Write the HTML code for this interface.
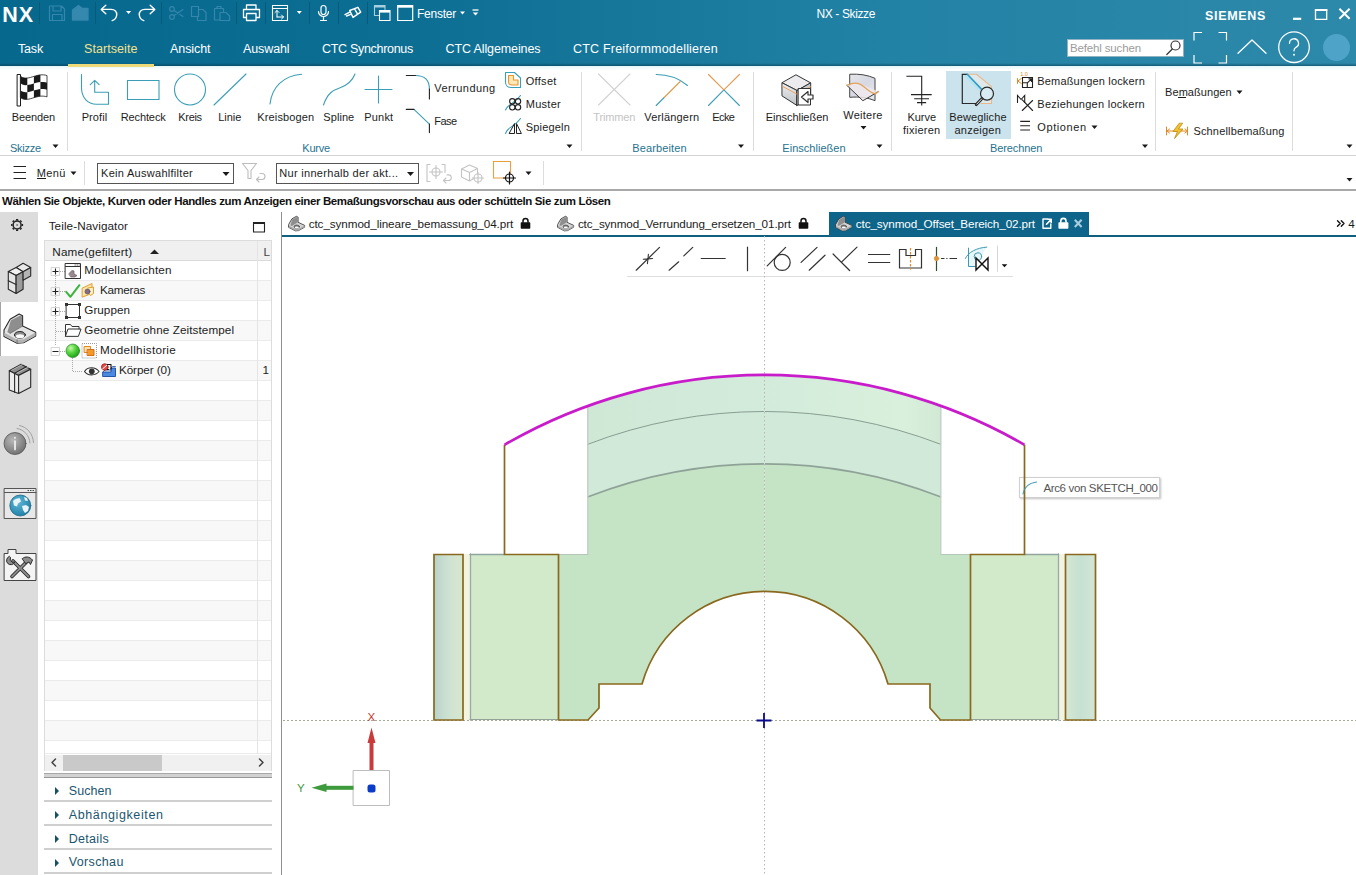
<!DOCTYPE html>
<html lang="de">
<head>
<meta charset="utf-8">
<title>NX - Skizze</title>
<style>
html,body{margin:0;padding:0;}
body{width:1356px;height:875px;overflow:hidden;background:#fff;position:relative;font-family:"Liberation Sans",sans-serif;font-size:12px;color:#1a1a1a;}
.abs{position:absolute;}
.t{position:absolute;white-space:nowrap;}
#hdr{left:0;top:0;width:1356px;height:66px;background:linear-gradient(90deg,#07688e 0%,#0d6e93 30%,#2282a5 65%,#2d89aa 100%);}
#hdrline{left:0;top:63px;width:1356px;height:3px;background:linear-gradient(180deg,rgba(0,50,70,0),rgba(0,50,70,.5));}
.vsep{position:absolute;width:1px;background:#dcdcdc;}
.arr{position:absolute;width:0;height:0;border-left:3px solid transparent;border-right:3px solid transparent;border-top:3.5px solid #1a1a1a;}
#ribline{left:0;top:155px;width:1356px;height:1px;background:#d4d4d4;}
#selline{left:0;top:189px;width:1356px;height:2px;background:#a9a9a9;}
#lbar{left:0;top:212px;width:38px;height:663px;background:#dcdcdc;}
#lsel{left:0;top:302px;width:38px;height:54px;background:#fff;}
.combo{position:absolute;height:21px;border:1px solid #555;box-sizing:border-box;background:#fff;}
.row{position:absolute;left:45px;width:226px;height:19px;border-bottom:1px solid #e9e9e9;}
.sec{position:absolute;left:44px;width:228px;height:2px;background:#cfcfcf;}
.tri{position:absolute;width:0;height:0;border-top:4px solid transparent;border-bottom:4px solid transparent;border-left:4.5px solid #15506a;}
</style>
</head>
<body>
<div id="hdr" class="abs"></div>
<div id="hdrline" class="abs"></div>
<div class="abs" style="left:68px;top:64px;width:86px;height:3px;background:#ecd97a;z-index:3"></div>
<div class="abs" style="left:1066.500px;top:39px;width:117px;height:18px;background:#fff;border:1px solid #8fb3c2;box-sizing:border-box"></div>
<div class="abs" style="left:1322.500px;top:33.500px;width:27px;height:27px;border-radius:50%;background:#4ea3c8"></div>
<svg class="abs" style="left:0;top:0" width="1356" height="66" viewBox="0 0 1356 66" fill="none" stroke="#fff" stroke-width="1.3" stroke-linecap="round" stroke-linejoin="round">
<!-- separators -->
<g stroke="#065a7c" stroke-width="1" stroke-linecap="butt"><path d="M39.5 2v22M95.5 2v22M161.5 2v22M236.5 2v22M265.5 2v22M309.5 2v22M338.5 2v22M367.5 2v22"/></g>
<!-- save (dim) -->
<g stroke="#3486ac" stroke-width="1.2"><path d="M49.5 6h12l3 3v11.5h-15zM53 6v5h8v-5M52.5 20.5v-6h9.5v6"/></g>
<!-- open (dim filled) -->
<path d="M72.5 20V10l6-4.5 4 3h5.500V20z" fill="#3588ae" stroke="#3588ae"/>
<!-- undo -->
<path d="M105.800 5.200l-4.600 4.200 4.600 4.300M101.500 9.400h9.500c4 0 6 2.500 5.700 5.600-.3 2.800-2 4.800-4.500 5.600" stroke-width="1.400"/>
<path d="M126 11h5.200l-2.600 3z" fill="#fff" stroke="none"/>
<!-- redo -->
<path d="M150.200 5.200l4.600 4.200-4.600 4.300M154.500 9.400h-9.500c-4 0-6 2.500-5.700 5.600.3 2.800 2 4.800 4.500 5.600" stroke-width="1.400"/>
<!-- cut copy paste (dim) -->
<g stroke="#3486ac" stroke-width="1.2"><circle cx="172" cy="17" r="2.300"/><circle cx="172" cy="9" r="2.300"/><path d="M174 15.500l9-6M174 10.500l9 6"/>
<path d="M191.500 6.500h7v10h-7zM198.500 9.500h4.500l3 3v8h-8.500v-4"/>
<path d="M214.500 8.500h9v4M214.500 8.500v11.500h5.500M217 8.500v-2h4v2M220 12.500h6l3.500 3.500v4.500h-9.500z"/></g>
<!-- print -->
<path d="M246.500 9.500V5h9.500v4.500M246.500 17.500h-3v-8h16v8h-3M246.500 13.500h9.500v7h-9.500z"/>
<!-- window w/ arrows -->
<path d="M272.500 5.500h15v15h-15zM272.500 8.500h15" stroke-width="1.100"/><path d="M277 17v-6.500M275 12.500l2-2 2 2M277 17h6.500M281.500 15l2 2-2 2" stroke-width="1"/>
<path d="M296.800 11h5l-2.500 3z" fill="#fff" stroke="none"/>
<!-- mic -->
<path d="M321 8a2.500 2.500 0 0 1 5 0v4a2.500 2.500 0 0 1-5 0zM318.500 11.500a5 5 0 0 0 10 0M323.500 16.700v3.500M320.500 20.500h6" stroke-width="1.200"/>
<!-- tag -->
<path d="M349.700 10.500L357.900 7.300 360.700 12.200 353 17.400zM354.500 8.700l3 5.500M345 14.600l4.300-2.300M346.500 16l3.700-1.300" stroke-width="1.400"/>
<!-- cascade windows -->
<g stroke-width="1.100" stroke-linejoin="miter"><path d="M374.500 5.500h10.500v4M374.500 5.500v10h4.500" stroke="#a9cfdf"/><path d="M374.500 6.500h10.500" stroke="#a9cfdf" stroke-width="2" stroke-linecap="butt"/><path d="M379.500 10.500h10.500v10h-10.500z"/><path d="M379.500 11.500h10.500" stroke-width="2.200" stroke-linecap="butt"/></g>
<!-- window -->
<path d="M397.700 5.700h15v14.800h-15z" stroke-width="1.200" stroke-linejoin="miter"/><path d="M397.500 6.500h15.500" stroke-width="2.400" stroke-linecap="butt"/>
<path d="M460 11.500h5l-2.500 3z" fill="#fff" stroke="none"/>
<path d="M472.800 12.500h5.400l-2.700 3z" fill="#fff" stroke="none"/><path d="M472.500 10h6" stroke-width="1.300" stroke-linecap="butt"/>
<!-- window controls -->
<path d="M1293 18.800h8.200" stroke-width="2.200" stroke-linecap="butt"/>
<path d="M1315.500 9.700h11.200v9.600h-11.200z" stroke-width="1.300" stroke-linejoin="miter"/><path d="M1314.900 10h12.400" stroke-width="2" stroke-linecap="butt"/>
<path d="M1339.400 8.800l10.200 10M1349.600 8.800l-10.200 10" stroke-width="2" stroke-linecap="butt"/>
<!-- search magnifier -->
<g stroke="#333" stroke-width="1.200"><circle cx="1175.500" cy="45.500" r="4.500" fill="#fff"/><path d="M1172.300 49l-5.500 5.500"/></g>
<!-- fullscreen brackets -->
<path d="M1194 40.500v-8h8M1218.500 32.500h8v8M1226.500 55v8h-8M1202 63h-8v-8" stroke-width="1.200" stroke-linecap="butt" stroke-linejoin="miter"/>
<!-- chevron up -->
<path d="M1238 53.300l14-13.300 14 13.300" stroke-width="1.300"/>
<!-- help -->
<circle cx="1294" cy="47.200" r="15.300" stroke-width="1.300"/>
<path d="M1289.500 43.300a4.500 4.500 0 1 1 6.500 4c-1.500 1-2 1.800-2 3.500" stroke-width="1.300"/><circle cx="1294" cy="54.800" r="1" fill="#fff" stroke="none"/>
</svg>

<div id="ribline" class="abs"></div>
<div id="selline" class="abs"></div>
<div class="abs" id="ribglow" style="left:0;top:66px;width:1356px;height:4px;background:linear-gradient(180deg,#e4f5f8,#fff)"></div>
<div class="abs" style="left:946px;top:71px;width:65px;height:68px;background:#cbe3ec"></div>
<div class="vsep" style="left:67px;top:72px;height:79px"></div>
<div class="vsep" style="left:581px;top:72px;height:79px"></div>
<div class="vsep" style="left:753px;top:72px;height:79px"></div>
<div class="vsep" style="left:891px;top:72px;height:79px"></div>
<div class="vsep" style="left:1155px;top:72px;height:79px"></div>
<div class="vsep" style="left:1292px;top:72px;height:79px"></div>
<div class="vsep" style="left:84px;top:161px;height:24px"></div>
<div class="vsep" style="left:543px;top:161px;height:24px"></div>
<div class="combo" style="left:97px;top:162.500px;width:137px"></div>
<div class="combo" style="left:276px;top:162.500px;width:143px"></div>
<div class="abs" id="ul1" style="left:36.500px;top:178px;width:9px;height:1px;background:#1c1c1c"></div>
<div class="abs" id="ul2" style="left:1177.500px;top:97px;width:8.500px;height:1px;background:#1c1c1c"></div>
<svg class="abs" style="left:0;top:66px" width="1356" height="125" viewBox="0 66 1356 125" fill="none" stroke="#3b9eb7" stroke-width="1.100" stroke-linecap="round" stroke-linejoin="round">
<!-- small dropdown arrows -->
<g fill="#1a1a1a" stroke="none">
<path d="M52.500 144.500h6l-3 3.500zM566.500 144.500h6l-3 3.500zM738 144.500h6l-3 3.500zM876.500 144.500h6l-3 3.500zM1142 144.500h6l-3 3.500zM1346.500 144.500h6l-3 3.500zM1346.500 178h6l-3 3.500z"/>
<path d="M860.500 126h6l-3 3.500zM1091.500 125.500h6l-3 3.500zM1236.500 90.500h6l-3 3.500zM70.500 171.500h6l-3 3.500zM222.500 172h7l-3.500 4zM407 172h7l-3.500 4zM525.500 171.500h6l-3 3.500z"/>
</g>
<!-- flag -->
<path d="M17.500 74.500h3v31.500h-3z" fill="#fff" stroke="#1a1a1a" stroke-width="1"/>
<path d="M20.7 76.5L22.3 77.4L24.0 77.9L25.6 78.1L27.3 78.0L28.9 77.8L30.6 77.4L32.2 76.9L33.9 76.4L35.5 75.9L37.1 75.5L38.8 75.1L40.4 74.9L42.1 74.8L43.7 74.9L45.4 75.1L47.0 75.6L47.0 96.9L45.4 96.4L43.7 96.2L42.1 96.1L40.4 96.2L38.8 96.4L37.1 96.8L35.5 97.2L33.9 97.7L32.2 98.2L30.6 98.7L28.9 99.1L27.3 99.3L25.6 99.4L24.0 99.2L22.3 98.7L20.7 97.8z" fill="#fff" stroke="#1a1a1a" stroke-width=".8"/>
<path d="M20.7 76.5L22.4 77.4L24.0 77.9L25.6 78.1L27.3 78.0L27.3 85.1L25.6 85.2L24.0 85.0L22.4 84.5L20.7 83.6zM33.9 76.4L35.5 75.9L37.1 75.5L38.8 75.1L40.4 74.9L40.4 82.0L38.8 82.2L37.1 82.6L35.5 83.0L33.9 83.5zM27.3 85.1L28.9 84.8L30.6 84.5L32.2 84.0L33.9 83.5L33.9 90.6L32.2 91.1L30.6 91.6L28.9 91.9L27.3 92.2zM40.4 82.0L42.0 81.9L43.7 82.0L45.4 82.2L47.0 82.7L47.0 89.8L45.4 89.3L43.7 89.1L42.0 89.0L40.4 89.1zM20.7 90.7L22.4 91.6L24.0 92.1L25.6 92.3L27.3 92.2L27.3 99.3L25.6 99.4L24.0 99.2L22.4 98.7L20.7 97.8zM33.9 90.6L35.5 90.1L37.1 89.7L38.8 89.3L40.4 89.1L40.4 96.2L38.8 96.4L37.1 96.8L35.5 97.2L33.9 97.7z" fill="#1a1a1a" stroke="none"/>
<!-- Profil -->
<path d="M81.500 74.500v13c0 10 6 16.700 15 16.700h12v-12h-13.800v-11M90.300 84.600l4.400-4.300 4.400 4.300"/>
<!-- Rechteck -->
<path d="M127.500 80.500h31.500v19h-31.500z" stroke-linejoin="miter"/>
<!-- Kreis -->
<circle cx="190" cy="89.500" r="15.500"/>
<!-- Linie -->
<path d="M214 105l32-31"/>
<!-- Kreisbogen -->
<path d="M270 104c2-17 13-28 31.500-29.700"/>
<!-- Spline -->
<path d="M323.500 105c4-12 10-15 16-17s12-5 15.500-14"/>
<!-- Punkt -->
<path d="M365 89.500h27M378.500 76v27"/>
<!-- Verrundung -->
<path d="M415.400 75.500c9 0 14 5 14 13.600"/><path d="M406.300 75.500h9.100M429.400 89.100v9.800" stroke="#222"/>
<!-- Fase -->
<path d="M414 109.400l15.400 14.700"/><path d="M406.300 109.400h7.700M429.400 124.100v8.500" stroke="#222"/>
<!-- Offset -->
<path d="M505.500 72.500h9l6 5.500v9.500h-9.500c-3.500 0-5.500-2.500-5.500-5.500z"/>
<path d="M508.500 75.500h5v4.500h4.500v5h-6c-2 0-3.500-1.500-3.500-3.500z" fill="#fde6b8" stroke="#e8962e"/>
<!-- Muster -->
<path d="M505.500 110c2-6 9-6 15-14.500"/>
<g stroke="#222" stroke-width="1.100"><circle cx="512.300" cy="101.300" r="2.700"/><circle cx="518" cy="101.300" r="2.700"/><circle cx="512.300" cy="107.300" r="2.700"/><circle cx="518" cy="107.300" r="2.700"/></g>
<!-- Spiegeln -->
<path d="M505.500 133.500c2-7 9-6 15-15"/>
<path d="M514.500 124v9.500h-5zM516.500 124v9.500h4.500z" stroke="#222" stroke-width="1"/>
<!-- Trimmen -->
<path d="M598.500 74l31.500 31M630 74l-31.500 31" stroke="#d2d2d2"/>
<!-- Verlaengern -->
<path d="M656.200 74.500c13 0 23 4 31.300 11"/><path d="M656.200 105.500l8-8"/><path d="M664.200 97.500l16-16" stroke="#e09a50"/>
<!-- Ecke -->
<path d="M708.500 105.500l15.400-15.700 15.500 15.700"/><path d="M708.500 74.500l15.400 15.300 15.500-15.300" stroke="#e09a50"/>
<!-- Einschliessen cube -->
<defs><linearGradient id="cg" x1="0" y1="0" x2="0" y2="1"><stop offset="0" stop-color="#eceef0"/><stop offset="1" stop-color="#bfc3c8"/></linearGradient></defs>
<g stroke="#333" stroke-width="1">
<path d="M796.300 75L810.700 82.900 797 90.500 782.300 82.900z" fill="#ececee"/>
<path d="M782.300 82.900L797 90.500V105.500L782.300 96.100z" fill="url(#cg)"/>
<path d="M797 90.500L810.700 82.900V97L797 105.500z" fill="#c9ccd0"/>
<path d="M782.800 86.500L797 94.200l13.500-7.500" stroke="#eaa45a" stroke-width="1" fill="none"/>
<path d="M798.500 88.500h12v16.500h-12z" fill="#fff" stroke-linejoin="miter"/>
<path d="M813 95h-5v-3.500l-6.500 5.500 6.500 5.500v-3.500h5z" fill="#fff" stroke-width="1.200"/>
</g>
<!-- Weitere -->
<defs><linearGradient id="wg" x1="0" y1="0" x2="1" y2="1"><stop offset="0" stop-color="#e6e6ea"/><stop offset=".5" stop-color="#d6d8e2"/><stop offset="1" stop-color="#ececf0"/></linearGradient></defs>
<g stroke-width="1">
<path d="M850.100 74.200c9-.5 17.500.8 24.900 4.100v22.400c-7.500-3.200-16-4.200-24.900-3.400z" fill="url(#wg)" stroke="#444"/>
<path d="M846.900 85.400L858.300 83.300 878.600 91.500 862.900 100.700z" fill="#efe9ec" fill-opacity=".85" stroke="none"/>
<path d="M846.900 85.400L862.900 100.700 878.600 91.500" stroke="#3a3a3a" fill="none"/>
<path d="M846.900 85.400c5-2.500 9-3 12.500-1.500 5 2 9 8 15.500 10l3.700-2.400" stroke="#e2a25a" stroke-width="1.200" fill="none"/>
</g>
<!-- Kurve fixieren -->
<path d="M906.400 76.300h15.300v29.200M911 94.600h20.700M914.200 98.800h14.800M917 102.600h9.100" stroke="#222" stroke-linecap="butt" stroke-linejoin="miter"/>
<!-- Bewegliche anzeigen -->
<path d="M967.300 74.300H976.500L991.500 86.600V103.500H981.900L981.200 88.900z" fill="#dfe9ec" stroke="none"/>
<path d="M963 75L967.300 74.300 981.200 88.900 979 91z" fill="#b8e4f2" stroke="none"/>
<path d="M967.300 74.300H976.500L991.500 86.600V103.500H981" stroke="#e9b88a" stroke-width="1.100"/>
<path d="M967.300 74.300H962.300V103.500H975.900" stroke="#2a2a2a" stroke-width="1.200" stroke-linejoin="miter"/>
<path d="M967.300 74.300L981.200 88.900" stroke="#2f9cc4" stroke-width="1.600"/>
<circle cx="987" cy="93.700" r="6.500" stroke="#2a2a2a" stroke-width="1.200" fill="#d8ebf2"/>
<path d="M982 98.500L976.300 104.600" stroke="#2a2a2a" stroke-width="3" stroke-linecap="round"/><path d="M981.600 99L976.800 104.100" stroke="#e8f2f5" stroke-width="1" stroke-linecap="round"/>
<!-- Bemassungen lockern icon -->
<g stroke="#222" stroke-width="1.100" stroke-linejoin="miter"><path d="M1022.500 77.500h10v10h-10zM1022.500 82.800h4.800v4.700"/><path d="M1027.300 82.800l4-3.700M1028.500 78.900h3v3" stroke-linecap="butt"/></g>
<path d="M1017.500 78.500v5M1021.300 78.500l-3.500 2.500 3.500 2.500" stroke="#e08a2a" stroke-width="1"/>
<text x="1020.200" y="76.300" font-family="Liberation Sans, sans-serif" font-size="5.500" fill="#e08a2a" stroke="none">1.0</text>
<!-- Beziehungen lockern icon -->
<g stroke="#222" stroke-width="1.100"><path d="M1017.500 102.500v-7l3.600 4 3.600-4v7" stroke-linejoin="miter"/><path d="M1022.300 99.900l10.300 10.600M1032.600 100.500l-10.300 10"/></g>
<!-- Optionen -->
<path d="M1020.200 121.400h9.800M1020.200 125.700h9.800M1020.200 130h9.800" stroke="#222" stroke-linecap="butt"/>
<!-- Schnellbemassung -->
<g stroke="#e08a2a" stroke-width="1"><path d="M1166.500 127v8M1187.500 127v8M1167 131h20M1169.500 129l-2.500 2 2.500 2M1185 129l2.500 2-2.500 2"/></g>
<path d="M1179 123.500l-6 8h4.500l-3 7 8.500-9.500h-4.500l4-5.500z" fill="#f2c230" stroke="#b98a10" stroke-width=".8"/>
<!-- hamburger -->
<path d="M13.500 166.500h12.500M13.500 172.500h12.500M13.500 178.500h12.500" stroke="#222" stroke-linecap="butt"/>
<!-- funnel (grey) -->
<g stroke="#bdbdbd" stroke-width="1.100"><path d="M242.500 163.500h14l-5.500 7v8h-3v-8z"/><path d="M259 177l-2.500 2.500 2.500 2.500M257 179.500h5a3 3 0 0 0 0-6h-2"/></g>
<!-- grey icons -->
<g stroke="#c4c4c4" stroke-width="1.100"><path d="M430 164.500h-3v17h3M442 164.500h3v8"/><circle cx="436" cy="172" r="4"/><path d="M436 165.500v13M429.500 172h13"/><path d="M446 178l-2.500 2.500 2.500 2.500M444 180.500h4.500a2.800 2.800 0 0 0 0-5.600h-1.500"/>
<path d="M461.500 169l8-4 8 3.500v8l-8 4.500-8-4zM461.500 169l8 3.500 8-4M469.500 172.500v8.500"/><circle cx="478" cy="178" r="4" fill="#fff"/><path d="M478 172.500v11M472.500 178h11"/></g>
<!-- orange square with crosshair -->
<path d="M493.500 161.500h17v16.500h-17z" stroke="#e8a040" stroke-linejoin="miter"/>
<g stroke="#111" stroke-width="1.200"><circle cx="509.500" cy="178" r="4" fill="#fff"/><path d="M509.500 172v12M503.500 178h12"/></g>
</svg>

<div id="lbar" class="abs"></div>
<div id="lsel" class="abs"></div>
<div class="abs" style="left:44px;top:212px;width:228px;height:663px;background:#fff"></div>
<div class="abs" style="left:45px;top:241px;width:226px;height:20px;background:#f0f0f0;border-bottom:1px solid #dadada;box-sizing:border-box"></div>
<div class="abs" style="left:45px;top:261px;width:226px;height:20px;background:#fff;border-bottom:1px solid #ebebeb;box-sizing:border-box"></div>
<div class="abs" style="left:45px;top:281px;width:226px;height:20px;background:#f8f8f8;border-bottom:1px solid #ebebeb;box-sizing:border-box"></div>
<div class="abs" style="left:45px;top:301px;width:226px;height:20px;background:#fff;border-bottom:1px solid #ebebeb;box-sizing:border-box"></div>
<div class="abs" style="left:45px;top:321px;width:226px;height:20px;background:#f8f8f8;border-bottom:1px solid #ebebeb;box-sizing:border-box"></div>
<div class="abs" style="left:45px;top:341px;width:226px;height:20px;background:#fff;border-bottom:1px solid #ebebeb;box-sizing:border-box"></div>
<div class="abs" style="left:45px;top:361px;width:226px;height:20px;background:#f8f8f8;border-bottom:1px solid #ebebeb;box-sizing:border-box"></div>
<div class="abs" style="left:45px;top:381px;width:226px;height:20px;background:#fff;border-bottom:1px solid #ebebeb;box-sizing:border-box"></div>
<div class="abs" style="left:45px;top:401px;width:226px;height:20px;background:#f8f8f8;border-bottom:1px solid #ebebeb;box-sizing:border-box"></div>
<div class="abs" style="left:45px;top:421px;width:226px;height:20px;background:#fff;border-bottom:1px solid #ebebeb;box-sizing:border-box"></div>
<div class="abs" style="left:45px;top:441px;width:226px;height:20px;background:#f8f8f8;border-bottom:1px solid #ebebeb;box-sizing:border-box"></div>
<div class="abs" style="left:45px;top:461px;width:226px;height:20px;background:#fff;border-bottom:1px solid #ebebeb;box-sizing:border-box"></div>
<div class="abs" style="left:45px;top:481px;width:226px;height:20px;background:#f8f8f8;border-bottom:1px solid #ebebeb;box-sizing:border-box"></div>
<div class="abs" style="left:45px;top:501px;width:226px;height:20px;background:#fff;border-bottom:1px solid #ebebeb;box-sizing:border-box"></div>
<div class="abs" style="left:45px;top:521px;width:226px;height:20px;background:#f8f8f8;border-bottom:1px solid #ebebeb;box-sizing:border-box"></div>
<div class="abs" style="left:45px;top:541px;width:226px;height:20px;background:#fff;border-bottom:1px solid #ebebeb;box-sizing:border-box"></div>
<div class="abs" style="left:45px;top:561px;width:226px;height:20px;background:#f8f8f8;border-bottom:1px solid #ebebeb;box-sizing:border-box"></div>
<div class="abs" style="left:45px;top:581px;width:226px;height:20px;background:#fff;border-bottom:1px solid #ebebeb;box-sizing:border-box"></div>
<div class="abs" style="left:45px;top:601px;width:226px;height:20px;background:#f8f8f8;border-bottom:1px solid #ebebeb;box-sizing:border-box"></div>
<div class="abs" style="left:45px;top:621px;width:226px;height:20px;background:#fff;border-bottom:1px solid #ebebeb;box-sizing:border-box"></div>
<div class="abs" style="left:45px;top:641px;width:226px;height:20px;background:#f8f8f8;border-bottom:1px solid #ebebeb;box-sizing:border-box"></div>
<div class="abs" style="left:45px;top:661px;width:226px;height:20px;background:#fff;border-bottom:1px solid #ebebeb;box-sizing:border-box"></div>
<div class="abs" style="left:45px;top:681px;width:226px;height:20px;background:#f8f8f8;border-bottom:1px solid #ebebeb;box-sizing:border-box"></div>
<div class="abs" style="left:45px;top:701px;width:226px;height:20px;background:#fff;border-bottom:1px solid #ebebeb;box-sizing:border-box"></div>
<div class="abs" style="left:45px;top:721px;width:226px;height:20px;background:#f8f8f8;border-bottom:1px solid #ebebeb;box-sizing:border-box"></div>
<div class="abs" style="left:45px;top:741px;width:226px;height:13px;background:#fff;border-bottom:1px solid #ebebeb;box-sizing:border-box"></div>
<div class="abs" style="left:257px;top:241px;width:1px;height:513px;background:#e4e4e4"></div>
<div class="abs" style="left:44px;top:240px;width:228px;height:1px;background:#dcdcdc"></div>
<div class="abs" style="left:44px;top:240px;width:1px;height:531px;background:#dcdcdc"></div>
<div class="abs" style="left:271px;top:240px;width:1px;height:531px;background:#dcdcdc"></div>
<div class="abs" style="left:45px;top:755px;width:226px;height:16px;background:#f0f0f0"></div>
<div class="abs" style="left:63px;top:755px;width:99px;height:16px;background:#c9c9c9"></div>
<div class="abs" style="left:44px;top:773px;width:228px;height:5px;background:#d2d2d2;border-top:1px solid #a8a8a8;border-bottom:1px solid #989898;box-sizing:border-box"></div>
<div class="sec" style="top:800px"></div>
<div class="sec" style="top:824px"></div>
<div class="sec" style="top:848px"></div>
<div class="sec" style="top:872px"></div>
<div class="tri" style="left:54.500px;top:786.5px"></div>
<div class="tri" style="left:54.500px;top:811px"></div>
<div class="tri" style="left:54.500px;top:835px"></div>
<div class="tri" style="left:54.500px;top:858.6px"></div>
<div class="abs" style="left:281px;top:212px;width:1px;height:663px;background:#8f8f8f"></div>
<div class="abs" style="left:272px;top:212px;width:9px;height:663px;background:#fff"></div>
<div class="abs" style="left:0;top:302px;width:1px;height:54px;background:#a4a4a4"></div><svg class="abs" style="left:0;top:212px" width="283" height="663" viewBox="0 212 283 663" fill="none" stroke="#222" stroke-width="1" stroke-linecap="round" stroke-linejoin="round">
<!-- gear -->
<circle cx="17.1" cy="225" r="4" stroke-width="1.500" stroke="#222"/><path d="M21.70 225.00L23.10 225.00M20.35 228.25L21.34 229.24M17.10 229.60L17.10 231.00M13.85 228.25L12.86 229.24M12.50 225.00L11.10 225.00M13.85 221.75L12.86 220.76M17.10 220.40L17.10 219.00M20.35 221.75L21.34 220.76" stroke-width="2.200" stroke-linecap="butt" stroke="#222"/><circle cx="17.1" cy="225" r=".7" fill="#222" stroke="none"/>
<!-- icon1 blocks -->
<g stroke="#2a2a2a" stroke-width="1.100" stroke-linejoin="round">
<path d="M16.100 267.500L23.100 263.300 30.700 267.600 23.100 271.800z" fill="#e9e9e9"/>
<path d="M8.300 271.600L16.100 267.500 23.100 271.800 16.100 275.600z" fill="#f2f2f2"/>
<path d="M8.300 271.600L16.100 275.600V293.500L8.300 289.200z" fill="#e6e6e6"/>
<path d="M16.100 275.600L23.100 271.800V289.200L16.100 293.500z" fill="#9c9c9c"/>
<path d="M23.100 271.800L30.700 267.600V276.100L23.100 280.200z" fill="#b4b4b4"/>
<path d="M8.300 280.700L16.100 284.400" fill="none"/>
</g>
<!-- icon2 bracket -->
<g stroke="#2a2a2a" stroke-width="1.100" stroke-linejoin="round">
<path d="M4 329.900L10.100 319.300 19.100 314.100 22.600 315.800V326.100L35.700 332.200V335.900L23.600 342.700 17.100 343.200 4 336.400z" fill="#e4e4e4"/>
<path d="M10.800 320.600L20.100 315.600 22.100 316.600V326.100L10 333.500 7.300 332.200z" fill="#8e8e8e" stroke="none"/>
<path d="M4.300 336L17.100 342.900 23.600 342.400 35.500 335.700V332.500L23.600 339.300 17.100 339.700 4.300 332.800z" fill="#b2b2b2" stroke="none"/>
<path d="M22.600 326.100L10 333.500M17.100 339.700v3.300" stroke="#555" stroke-width=".7" fill="none"/>
<ellipse cx="19.900" cy="334.900" rx="5.500" ry="3.400" fill="#8a8a8a" stroke-width="1"/>
<ellipse cx="20" cy="336.300" rx="4.200" ry="2" fill="#fafafa" stroke="none"/>
</g>
<!-- icon3 books -->
<g stroke="#2a2a2a" stroke-width="1.100" stroke-linejoin="round">
<path d="M9.300 370.800L21.100 364.300 30.700 369.300 18.600 375.400z" fill="#8c8c8c"/>
<path d="M9.300 370.800L18.600 375.400V393.500L9.300 390z" fill="#ececec"/>
<path d="M18.600 375.400L30.700 369.300V387.200L18.600 393.500z" fill="#dedede"/>
<path d="M14.600 373.300V392.200M14.600 373.300L26.400 366.800" fill="none"/>
<path d="M11.500 370.300l11.500-6.300M16.800 373.200l11.500-6.200" stroke="#ddd" stroke-width=".6" fill="none"/>
</g>
<!-- icon4 info -->
<defs><radialGradient id="gi" cx=".4" cy=".35" r=".7"><stop offset="0" stop-color="#b8b8b8"/><stop offset="1" stop-color="#6e6e6e"/></radialGradient>
<radialGradient id="gg" cx=".35" cy=".3" r=".75"><stop offset="0" stop-color="#c8f7a8"/><stop offset=".5" stop-color="#4fd33a"/><stop offset="1" stop-color="#1f9a1a"/></radialGradient>
<radialGradient id="gw" cx=".4" cy=".35" r=".7"><stop offset="0" stop-color="#5fb7d8"/><stop offset="1" stop-color="#1e7fa5"/></radialGradient></defs>
<circle cx="15" cy="443.500" r="11" fill="url(#gi)" stroke="#555" stroke-width=".8"/>
<path d="M15 437.500v.5M15 441v8.500" stroke="#f2f2f2" stroke-width="1.700"/>
<path d="M17 428.500c7 1 12.500 7 13 14.500M19.500 425.500c7.500 1.500 13.500 8 14 17" stroke="#9a9a9a" stroke-width=".9"/>
<!-- icon5 globe -->
<path d="M4.500 488.500h31.500v30h-31.500z" fill="#e8e8e8" stroke="#555" stroke-width="1"/><path d="M4.500 492.500h31.500" stroke="#555"/><path d="M28 490.500h.5M30.500 490.500h.5M33 490.500h.5" stroke="#333" stroke-width="1"/>
<circle cx="20.300" cy="505.500" r="10.500" fill="url(#gw)" stroke="#1d6a88" stroke-width=".8"/>
<path d="M13 501c2-2 5-3 7-2.500l1 3-3 2-1 3-3-1zM22 506l4-1 3 2-1 4-3 2-2-3zM24 497l3 1 1 3-3-.5z" fill="#e9f4f8" stroke="none"/>
<!-- icon6 tools -->
<path d="M4.500 553.500h3.500v-4h8v4h20v27h-31.500z" fill="#f4f4f4" stroke="#444" stroke-width="1"/>
<g stroke="#2a2a2a" stroke-width="3.600"><path d="M13 561l15.500 15.500M12 576.500l14-14"/></g>
<g stroke="#8c8c8c" stroke-width="1.800"><path d="M13 561l15.500 15.500M12 576.500l14-14"/></g>
<path d="M9 556.500a4.300 4.300 0 1 0 5.800 5.500l-2.600.3-2-2 .3-2.500z" fill="#8c8c8c" stroke="#2a2a2a" stroke-width="1"/>
<path d="M22.500 558.500c3-2.500 7-2 10 1.500l-2 4.500-1.500-2.500-3 1.500z" fill="#8c8c8c" stroke="#2a2a2a" stroke-width="1"/>
<!-- maximize icon -->
<path d="M253.500 222.500h11v9.500h-11z" stroke="#222" stroke-width="1.100" stroke-linejoin="miter"/><path d="M253 223h12" stroke="#222" stroke-width="2" stroke-linecap="butt"/>
<!-- sort arrow -->
<path d="M150 254h9l-4.500-4.500z" fill="#222" stroke="none"/>
<!-- tree dotted lines -->
<g stroke="#aaa" stroke-width="1" stroke-dasharray="1 1" stroke-linecap="butt"><path d="M55.500 276v70M60 271.500h5M60 291.500h5M60 311.500h5M56 331.500h9M60 351.500h5M72.500 358v13.500M73 371.500h10"/></g>
<!-- plus/minus boxes -->
<g stroke="#222" stroke-width="1.100" stroke-linecap="butt"><path d="M52.500 271.500h6M55.500 268.500v6M52.500 291.500h6M55.500 288.500v6M52.500 311.500h6M55.500 308.500v6M52.500 351.500h6"/></g>
<g stroke="#d5d5d5" stroke-width="1" stroke-linejoin="miter"><path d="M51.500 267.500h8v8h-8zM51.500 287.500h8v8h-8zM51.500 307.500h8v8h-8zM51.500 347.500h8v8h-8z"/></g>
<!-- Modellansichten icon -->
<path d="M65.500 263.500h15v15h-15zM65.500 266.500h15" stroke="#333" stroke-linejoin="miter"/><path d="M75 265h.5M77 265h.5M79 265h.2" stroke="#333" stroke-width=".8"/>
<path d="M69 273.500l3-3 2 .5v3l3 1.500-2 1.500h-4z" fill="#9a8a90" stroke="#6a5a60" stroke-width=".7"/>
<!-- check -->
<path d="M66.200 291.800l4.200 5 9-11.600" stroke="#3cb43c" stroke-width="2"/>
<!-- camera icon -->
<path d="M82.500 288l9.500-4.500v10l-9.500 3.500z" fill="#f8e6a8" stroke="#e0a030" stroke-width="1"/><path d="M88 288l5.500-1v6.500l-3 2" stroke="#e0a030" fill="#fdf0c8"/>
<circle cx="87.500" cy="291.500" r="2.500" fill="#8a6a8a" stroke="#555" stroke-width=".7"/>
<!-- Gruppen icon -->
<path d="M66.500 304.500h13v13h-13z" stroke="#333" stroke-linejoin="miter"/><g fill="#333" stroke="none"><rect x="65" y="303" width="3" height="3"/><rect x="78" y="303" width="3" height="3"/><rect x="65" y="316" width="3" height="3"/><rect x="78" y="316" width="3" height="3"/></g>
<!-- folder -->
<path d="M65.500 336v-11.500h5l1.500 2h7v2.500M65.500 336l2.500-7h13l-2.500 7z" stroke="#333" fill="#fff"/>
<!-- green ball -->
<circle cx="72.800" cy="350.800" r="6.800" fill="url(#gg)" stroke="#2a8a2a" stroke-width=".7"/>
<!-- model history icon -->
<path d="M82 343.500h14.500v14.500h-14.500z" stroke="#999" stroke-dasharray="1 1" stroke-linecap="butt"/>
<path d="M84.500 346.500h6v6h-6z" fill="#fbe0b0" stroke="#e0861a" stroke-linejoin="miter"/><path d="M87.500 349.500h6.500v6h-6.500z" fill="#f59a2a" stroke="#d0701a" stroke-linejoin="miter"/>
<!-- eye -->
<path d="M84.500 371.500c3-5 11-5 14.500 0c-3.500 4.500-11.500 4.500-14.500 0z" stroke="#333" stroke-width="1.100" fill="#fff"/><circle cx="91.800" cy="371.300" r="2.900" fill="#333" stroke="none"/>
<!-- body icon -->
<path d="M103 372h8v-4h4.500v8.500h-12.500z" fill="#4a8ae0" stroke="#1a4aa0" stroke-width=".9"/><path d="M103 372l2-2h6M111 368l1.500-1.500h3l0 0" stroke="#1a4aa0" stroke-width=".8"/>
<circle cx="104.800" cy="367" r="3.300" fill="#e24a4a" stroke="#a01a1a" stroke-width=".8"/><path d="M102.500 369l4.500-4" stroke="#fff" stroke-width="1"/>
<path d="M107 364.500h4v5M107 369.500h2" stroke="#111" stroke-width="1.100" stroke-linecap="butt"/>
<!-- scrollbar arrows -->
<path d="M55.500 759l-3.500 3.500 3.500 3.500M259.500 759l3.500 3.500-3.500 3.500" stroke="#444" stroke-width="1.500"/>
</svg>

<div class="abs" style="left:282px;top:235px;width:1074px;height:2px;background:#0f5f80"></div>
<div class="abs" style="left:829px;top:212px;width:260px;height:24px;background:#0e6589"></div>
<div class="abs" style="left:627px;top:276px;width:386px;height:1px;background:#dedede"></div>
<div class="abs" style="left:1019px;top:477px;width:141px;height:21px;background:#fff;border:1px solid #d0d0d0;box-sizing:border-box;box-shadow:1px 1px 2px rgba(0,0,0,.25)"></div>
<svg class="abs" style="left:283px;top:212px" width="1073" height="663" viewBox="283 212 1073 663" fill="none" stroke="#222" stroke-width="1" stroke-linecap="round" stroke-linejoin="round">
<defs>
<linearGradient id="fl" x1="0" x2="1"><stop offset="0" stop-color="#b9d3cb"/><stop offset=".55" stop-color="#cfe3d2"/><stop offset="1" stop-color="#d8e8cf"/></linearGradient>
<linearGradient id="fr" x1="0" x2="1"><stop offset="0" stop-color="#d6e8d4"/><stop offset=".5" stop-color="#c6e0d2"/><stop offset="1" stop-color="#d2e6d6"/></linearGradient>
<linearGradient id="band" x1="0" x2="1"><stop offset="0" stop-color="#cfe8d6"/><stop offset=".5" stop-color="#d3ebdb"/><stop offset=".9" stop-color="#d9f0dc"/><stop offset="1" stop-color="#d0e8d4"/></linearGradient>
<clipPath id="cb"><rect x="587.300" y="360" width="354" height="200"/></clipPath>
</defs>
<!-- ===== part geometry ===== -->
<!-- main body -->
<path d="M587.300 554V405.900A518.800 518.800 0 0 1 941 405.600V554H970V720H941L930 708V684H888A128 128 0 0 0 642 684H599V708L588 720H558V554z" fill="#c5e4c6" stroke="none"/>
<!-- upper bands -->
<g clip-path="url(#cb)" stroke="none">
<path d="M587.300 405.900A518.800 518.800 0 0 1 941.300 405.600V497A488 488 0 0 0 587.300 497z" fill="#d0e9d9"/>
<path d="M587.300 405.900A518.800 518.800 0 0 1 941.300 405.600V444.400A491 491 0 0 0 587.300 444.400z" fill="url(#band)"/>
</g>
<path d="M587.500 444.400A491 491 0 0 1 941 444.400" stroke-linecap="butt" stroke="#7f9488" stroke-width=".9"/>
<path d="M587.500 497A488 488 0 0 1 941 497" stroke-linecap="butt" stroke="#8fa297" stroke-width="1.600"/>
<path d="M587.800 406v148M940.800 406v148" stroke="#c4cec7" stroke-width="1.300" stroke-linecap="butt"/>
<path d="M558 554.500h30M941 554.500h29" stroke="#b5c5b8" stroke-width="1"/>
<!-- seam -->
<path d="M764.500 376v216" stroke="#d2ebd5" stroke-width="1"/>
<!-- side blocks -->
<rect x="470" y="554" width="88" height="166" fill="#d3eaca" stroke="none"/>
<rect x="970" y="554" width="88" height="166" fill="#d3eaca" stroke="none"/>
<rect x="463" y="554" width="7" height="166" fill="#f1f4e1" stroke="none"/>
<rect x="1058" y="554" width="7" height="166" fill="#f1f4e1" stroke="none"/>
<rect x="434" y="554" width="29" height="166" fill="url(#fl)" stroke="none"/>
<rect x="1065" y="554" width="30" height="166" fill="url(#fr)" stroke="none"/>
<path d="M470.500 554v166M1058.500 554v166" stroke="#9aa9a8" stroke-width="1.300"/>
<path d="M470 719.500h88M970 719.500h88" stroke="#93a39a" stroke-width="1.200"/><path d="M470 554.500h34M1025 554.500h33.500" stroke="#8fa5a0" stroke-width="1.300"/>
<!-- datum lines -->
<path d="M764.500 236v639" stroke="#bfb0bc" stroke-width="1" stroke-dasharray="1.500 2.500" stroke-linecap="butt"/>
<path d="M283 720.500h1073" stroke="#a2ad9a" stroke-width="1" stroke-dasharray="2 2" stroke-linecap="butt"/>
<!-- sketch curves (brown) -->
<g stroke="#8a681e" stroke-width="1.700" stroke-linejoin="miter" stroke-linecap="butt">
<path d="M434 554.500H463V720H434z"/>
<path d="M1065.500 554.500H1095.500V720H1065.500z"/>
<path d="M504.500 445V554.500H558.500V720H588L599 708V684H642A128 128 0 0 1 888 684H930V708L940.500 720H970.500V554.500H1024.500V445"/>
</g>
<!-- magenta arc -->
<path d="M504.500 444.800A518.800 518.800 0 0 1 1024.500 444.800" stroke="#c81ccb" stroke-width="2.700" stroke-linecap="butt"/>
<!-- origin cross -->
<path d="M756.500 720.500h15M764 713v15" stroke="#0a0a8a" stroke-width="1.800" stroke-linecap="butt"/>
<!-- ===== csys triad ===== -->
<path d="M353.500 770.500h36v35h-36z" fill="#fff" stroke="#bdbdbd" stroke-linejoin="miter"/>
<path d="M371.500 770v-28" stroke="#c93a3a" stroke-width="4" stroke-linecap="butt"/><path d="M367.500 743l4-15.500 4 15.500z" fill="#c93a3a" stroke="none"/>
<path d="M353.500 787.800h-28" stroke="#3d9a3d" stroke-width="4" stroke-linecap="butt"/><path d="M326.500 783.500l-15 4.300 15 4.300z" fill="#3d9a3d" stroke="none"/>
<rect x="367.500" y="784.500" width="8" height="8" rx="2.500" fill="#0a3cc8" stroke="none"/>
<!-- ===== doc tabs icons ===== -->
<g id="pi" stroke="#3a3a3a" stroke-width="1.700" stroke-linejoin="round" transform="translate(286.800 59.250) scale(.5)">
<path d="M4 329.900L10.100 319.300 19.100 314.100 22.600 315.800V326.100L35.700 332.200V335.900L23.600 342.700 17.100 343.200 4 336.400z" fill="#d4d4d4"/>
<path d="M10.800 320.600L20.100 315.600 22.100 316.600V326.100L10 333.500 7.300 332.200z" fill="#8e8e8e" stroke="none"/>
<path d="M4.300 336L17.100 342.900 23.600 342.400 35.500 335.700V332.500L23.600 339.300 17.100 339.700 4.300 332.800z" fill="#a8a8a8" stroke="none"/>
<ellipse cx="19.900" cy="334.900" rx="5.500" ry="3.400" fill="#777" stroke-width="1.200"/>
<ellipse cx="20" cy="336.300" rx="4.200" ry="2" fill="#fafafa" stroke="none"/>
</g>
<use href="#pi" x="269"/>
<use href="#pi" x="547"/>
<!-- locks -->
<g fill="#111" stroke="none"><rect x="520.700" y="222.300" width="9.600" height="6.500" rx=".8"/><rect x="798.700" y="222.300" width="9.600" height="6.500" rx=".8"/></g>
<path d="M523 222.300v-1.300a2.500 2.500 0 0 1 5 0v1.300M801 222.300v-1.300a2.500 2.500 0 0 1 5 0v1.300" stroke="#111" stroke-width="1.500"/>
<rect x="1058.400" y="222.300" width="10" height="6.500" rx=".8" fill="#fff" stroke="none"/><path d="M1060.800 222.300v-1.300a2.600 2.600 0 0 1 5.200 0v1.300" stroke="#fff" stroke-width="1.600"/>
<path d="M1050.800 224v4.300h-7.800v-9.300h4.500" stroke="#fff" stroke-width="1.400"/><path d="M1046.500 224.200l4.300-4.300M1048 219.300h3.200v3.200" stroke="#fff" stroke-width="1.600"/>
<path d="M1074.800 219.800l6.800 7.200M1081.600 219.800l-6.800 7.200" stroke="#a6cde0" stroke-width="2.100" stroke-linecap="butt"/>
<path d="M1337.500 220.800l2.700 2.700-2.700 2.700M1341.300 220.800l2.700 2.700-2.700 2.700" stroke="#111" stroke-width="1.400"/>
<!-- ===== sketch toolbar icons ===== -->
<g stroke="#333" stroke-width="1.200">
<path d="M636.200 270.200L659.500 247.400"/><path d="M643.300 259.200L648 258.900 647.400 263.600M648.400 254.200L648 258.900 652.600 258.500" stroke-width="1.100"/>
<path d="M669.100 270.200L678.700 261.800M683.800 255.900L692.700 247.400"/>
<path d="M701.200 258.500h24"/>
<path d="M747.500 247.100v23.600"/>
<circle cx="782.200" cy="262.400" r="8"/><path d="M767.200 265.800L785.600 247.400"/>
<path d="M801.100 262.400L817 247.400M809.200 270.200L825 255.200"/>
<path d="M833.100 254L849.600 270.500M841.500 262.100L857 247.100"/>
<path d="M868 254.500h22.200M868 262.500h22.200" stroke-linecap="butt"/>
<path d="M899.500 249.500v18.500h22v-18.500h-6v6h-9.500v-6z" stroke-linejoin="miter"/><path d="M910.500 248v21.500" stroke="#e08a2a" stroke-dasharray="2.500 1.500" stroke-linecap="butt"/>
<path d="M936.500 247.400v23.100" stroke="#2f4f2f"/><path d="M941 258.500h3.500M946.300 258.500h1.200M949.500 258.500h7.500" stroke-linecap="butt"/><circle cx="936.500" cy="258.500" r="2.200" fill="#e0943a" stroke="#e0943a" stroke-width=".8"/>
<path d="M968.500 248.500v18h7L986.500 247.500c-9 .5-16 4-18 9z" fill="#e6f6f9" stroke="none"/>
<path d="M965.400 258.400c3-6.300 11-10.500 21.400-11.300M968.500 248.100v18.400h6.500" stroke="#3a9ab3" stroke-width="1"/><circle cx="977.900" cy="256.500" r="3.700" stroke="#3a9ab3" stroke-width="1"/>
<path d="M976 258v12l12-12v12z" stroke="#111" stroke-width="1.400" stroke-linejoin="miter" fill="#fff"/>
</g>
<path d="M997.500 246v25.500" stroke="#d8d8d8"/>
<path d="M1001.700 264.300h5.600l-2.800 3z" fill="#111" stroke="none"/>
<!-- tooltip arc icon -->
<path d="M1023 494c1-7 6-11 13.500-12" stroke="#3a9ab3" stroke-width="1.100"/>
</svg>

<span class="t" style="left:2.2px;top:7.0px;font-size:21.5px;line-height:16px;color:#ffffff;font-weight:bold;letter-spacing:1.06px;">NX</span>
<span class="t" style="left:417px;top:5.5px;font-size:12px;line-height:16px;color:#ffffff;letter-spacing:-0.24px;">Fenster</span>
<span class="t" style="left:816.5px;top:6.0px;font-size:12px;line-height:16px;color:#ffffff;letter-spacing:-0.38px;">NX - Skizze</span>
<span class="t" style="left:1205px;top:8.0px;font-size:12.5px;line-height:16px;color:#ffffff;font-weight:bold;letter-spacing:0.68px;">SIEMENS</span>
<span class="t" style="left:18px;top:41.0px;font-size:12.5px;line-height:16px;color:#ffffff;letter-spacing:-0.18px;">Task</span>
<span class="t" style="left:84px;top:41.0px;font-size:12.5px;line-height:16px;color:#f3e28d;letter-spacing:0.07px;">Startseite</span>
<span class="t" style="left:170px;top:41.0px;font-size:12.5px;line-height:16px;color:#ffffff;letter-spacing:-0.07px;">Ansicht</span>
<span class="t" style="left:243px;top:41.0px;font-size:12.5px;line-height:16px;color:#ffffff;letter-spacing:-0.11px;">Auswahl</span>
<span class="t" style="left:322px;top:41.0px;font-size:12.5px;line-height:16px;color:#ffffff;letter-spacing:-0.30px;">CTC Synchronus</span>
<span class="t" style="left:445.5px;top:41.0px;font-size:12.5px;line-height:16px;color:#ffffff;letter-spacing:-0.11px;">CTC Allgemeines</span>
<span class="t" style="left:573px;top:41.0px;font-size:12.5px;line-height:16px;color:#ffffff;letter-spacing:0.20px;">CTC Freiformmodellieren</span>
<span class="t" style="left:1070px;top:40.0px;font-size:11.5px;line-height:16px;color:#9c9c9c;letter-spacing:-0.15px;">Befehl suchen</span>
<span class="t" style="left:11.7px;top:109.0px;font-size:11px;line-height:16px;color:#1c1c1c;letter-spacing:-0.11px;">Beenden</span>
<span class="t" style="left:81.7px;top:109.0px;font-size:11px;line-height:16px;color:#1c1c1c;letter-spacing:0.09px;">Profil</span>
<span class="t" style="left:120.7px;top:109.0px;font-size:11px;line-height:16px;color:#1c1c1c;letter-spacing:-0.11px;">Rechteck</span>
<span class="t" style="left:178.3px;top:109.0px;font-size:11px;line-height:16px;color:#1c1c1c;letter-spacing:-0.33px;">Kreis</span>
<span class="t" style="left:218.3px;top:109.0px;font-size:11px;line-height:16px;color:#1c1c1c;letter-spacing:-0.05px;">Linie</span>
<span class="t" style="left:257.3px;top:109.0px;font-size:11px;line-height:16px;color:#1c1c1c;letter-spacing:0.13px;">Kreisbogen</span>
<span class="t" style="left:323.3px;top:109.0px;font-size:11px;line-height:16px;color:#1c1c1c;letter-spacing:0.07px;">Spline</span>
<span class="t" style="left:364.3px;top:109.0px;font-size:11px;line-height:16px;color:#1c1c1c;letter-spacing:0.17px;">Punkt</span>
<span class="t" style="left:434.3px;top:79.5px;font-size:11px;line-height:16px;color:#1c1c1c;letter-spacing:0.45px;">Verrundung</span>
<span class="t" style="left:434.3px;top:113.0px;font-size:11px;line-height:16px;color:#1c1c1c;letter-spacing:-0.52px;">Fase</span>
<span class="t" style="left:525.7px;top:73.0px;font-size:11px;line-height:16px;color:#1c1c1c;letter-spacing:0.31px;">Offset</span>
<span class="t" style="left:525.7px;top:96.0px;font-size:11px;line-height:16px;color:#1c1c1c;letter-spacing:0.28px;">Muster</span>
<span class="t" style="left:525.7px;top:119.0px;font-size:11px;line-height:16px;color:#1c1c1c;letter-spacing:0.18px;">Spiegeln</span>
<span class="t" style="left:593.3px;top:109.0px;font-size:11px;line-height:16px;color:#c4c4c4;letter-spacing:-0.14px;">Trimmen</span>
<span class="t" style="left:644.3px;top:109.0px;font-size:11px;line-height:16px;color:#1c1c1c;letter-spacing:0.18px;">Verlängern</span>
<span class="t" style="left:712.3px;top:109.0px;font-size:11px;line-height:16px;color:#1c1c1c;letter-spacing:-0.62px;">Ecke</span>
<span class="t" style="left:765.7px;top:109.0px;font-size:11px;line-height:16px;color:#1c1c1c;letter-spacing:-0.03px;">Einschließen</span>
<span class="t" style="left:843.3px;top:107.0px;font-size:11px;line-height:16px;color:#1c1c1c;letter-spacing:0.24px;">Weitere</span>
<span class="t" style="left:907.5px;top:109.0px;font-size:11px;line-height:16px;color:#1c1c1c;letter-spacing:-0.05px;">Kurve</span>
<span class="t" style="left:903px;top:122.0px;font-size:11px;line-height:16px;color:#1c1c1c;letter-spacing:0.25px;">fixieren</span>
<span class="t" style="left:949.3px;top:109.0px;font-size:11px;line-height:16px;color:#1c1c1c;letter-spacing:0.11px;">Bewegliche</span>
<span class="t" style="left:954.5px;top:122.0px;font-size:11px;line-height:16px;color:#1c1c1c;letter-spacing:0.23px;">anzeigen</span>
<span class="t" style="left:1037.3px;top:73.0px;font-size:11px;line-height:16px;color:#1c1c1c;letter-spacing:0.17px;">Bemaßungen lockern</span>
<span class="t" style="left:1037.3px;top:96.0px;font-size:11px;line-height:16px;color:#1c1c1c;letter-spacing:0.26px;">Beziehungen lockern</span>
<span class="t" style="left:1037.3px;top:119.0px;font-size:11px;line-height:16px;color:#1c1c1c;letter-spacing:0.59px;">Optionen</span>
<span class="t" style="left:1165.1px;top:83.5px;font-size:11px;line-height:16px;color:#1c1c1c;letter-spacing:0.05px;">Bemaßungen</span>
<span class="t" style="left:1193.4px;top:122.9px;font-size:11px;line-height:16px;color:#1c1c1c;letter-spacing:0.17px;">Schnellbemaßung</span>
<span class="t" style="left:10px;top:140.0px;font-size:11px;line-height:16px;color:#26738f;letter-spacing:-0.28px;">Skizze</span>
<span class="t" style="left:302.3px;top:140.0px;font-size:11px;line-height:16px;color:#26738f;letter-spacing:-0.21px;">Kurve</span>
<span class="t" style="left:632.3px;top:140.0px;font-size:11px;line-height:16px;color:#26738f;letter-spacing:0.12px;">Bearbeiten</span>
<span class="t" style="left:782.3px;top:140.0px;font-size:11px;line-height:16px;color:#26738f;letter-spacing:0.03px;">Einschließen</span>
<span class="t" style="left:990px;top:140.0px;font-size:11px;line-height:16px;color:#26738f;letter-spacing:-0.10px;">Berechnen</span>
<span class="t" style="left:36.7px;top:165.3px;font-size:11px;line-height:16px;color:#1c1c1c;letter-spacing:0.37px;">Menü</span>
<span class="t" style="left:101px;top:165.0px;font-size:11px;line-height:16px;color:#1c1c1c;letter-spacing:0.29px;">Kein Auswahlfilter</span>
<span class="t" style="left:279.3px;top:165.0px;font-size:11px;line-height:16px;color:#1c1c1c;letter-spacing:0.30px;">Nur innerhalb der akt...</span>
<span class="t" style="left:2px;top:193.0px;font-size:11.5px;line-height:16px;color:#111;font-weight:bold;letter-spacing:-0.37px;">Wählen Sie Objekte, Kurven oder Handles zum Anzeigen einer Bemaßungsvorschau aus oder schütteln Sie zum Lösen</span>
<span class="t" style="left:48.7px;top:218.2px;font-size:11.7px;line-height:16px;color:#1c1c1c;letter-spacing:0.09px;">Teile-Navigator</span>
<span class="t" style="left:52.3px;top:243.7px;font-size:11.7px;line-height:16px;color:#1c1c1c;letter-spacing:0.18px;">Name(gefiltert)</span>
<span class="t" style="left:263.5px;top:243.7px;font-size:11.7px;line-height:16px;color:#444;">L</span>
<span class="t" style="left:84.3px;top:262.0px;font-size:11.7px;line-height:16px;color:#1c1c1c;letter-spacing:0.20px;">Modellansichten</span>
<span class="t" style="left:100px;top:282.0px;font-size:11.7px;line-height:16px;color:#1c1c1c;letter-spacing:-0.25px;">Kameras</span>
<span class="t" style="left:84.3px;top:302.0px;font-size:11.7px;line-height:16px;color:#1c1c1c;letter-spacing:0.03px;">Gruppen</span>
<span class="t" style="left:84.3px;top:322.0px;font-size:11.7px;line-height:16px;color:#1c1c1c;letter-spacing:0.09px;">Geometrie ohne Zeitstempel</span>
<span class="t" style="left:100px;top:342.0px;font-size:11.7px;line-height:16px;color:#1c1c1c;letter-spacing:0.28px;">Modellhistorie</span>
<span class="t" style="left:119px;top:362.0px;font-size:11.7px;line-height:16px;color:#1c1c1c;letter-spacing:-0.09px;">Körper (0)</span>
<span class="t" style="left:262.5px;top:362.0px;font-size:11.7px;line-height:16px;color:#1c1c1c;">1</span>
<span class="t" style="left:68.8px;top:782.5px;font-size:12.5px;line-height:16px;color:#1b566f;letter-spacing:0.03px;">Suchen</span>
<span class="t" style="left:68.8px;top:806.5px;font-size:12.5px;line-height:16px;color:#1b566f;letter-spacing:0.61px;">Abhängigkeiten</span>
<span class="t" style="left:68.8px;top:830.7px;font-size:12.5px;line-height:16px;color:#1b566f;letter-spacing:0.28px;">Details</span>
<span class="t" style="left:68.8px;top:854.1px;font-size:12.5px;line-height:16px;color:#1b566f;letter-spacing:0.35px;">Vorschau</span>
<span class="t" style="left:308.7px;top:215.7px;font-size:11.7px;line-height:16px;color:#1c1c1c;letter-spacing:-0.08px;">ctc_synmod_lineare_bemassung_04.prt</span>
<span class="t" style="left:577.9px;top:215.7px;font-size:11.7px;line-height:16px;color:#1c1c1c;letter-spacing:-0.11px;">ctc_synmod_Verrundung_ersetzen_01.prt</span>
<span class="t" style="left:855.8px;top:215.7px;font-size:11.7px;line-height:16px;color:#ffffff;letter-spacing:-0.10px;">ctc_synmod_Offset_Bereich_02.prt</span>
<span class="t" style="left:1348.3px;top:216.0px;font-size:11.7px;line-height:16px;color:#1c1c1c;">4</span>
<span class="t" style="left:1043.4px;top:480.0px;font-size:11.5px;line-height:16px;color:#555;letter-spacing:-0.35px;">Arc6 von SKETCH_000</span>
<span class="t" style="left:367.5px;top:709.2px;font-size:11.5px;line-height:16px;color:#c0392b;">X</span>
<span class="t" style="left:297px;top:779.6px;font-size:11.5px;line-height:16px;color:#3f9a3f;">Y</span>
</body>
</html>
